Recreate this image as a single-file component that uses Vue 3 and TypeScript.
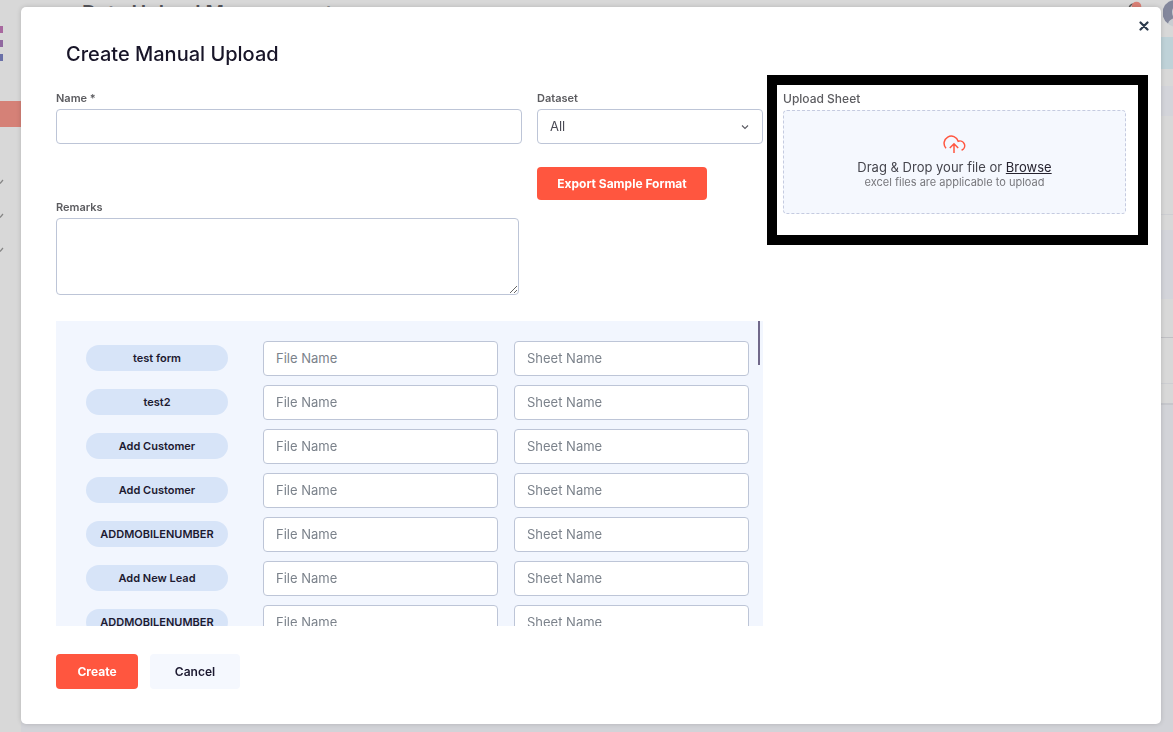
<script setup lang="ts">
import { computed, ref } from 'vue'

interface SheetRow {
  id: number
  form: string
  file: string
  sheet: string
}

const forms = ['test form', 'test2', 'Add Customer', 'Add Customer', 'ADDMOBILENUMBER', 'Add New Lead', 'ADDMOBILENUMBER']
const rows = ref<SheetRow[]>(forms.map((form, id) => ({ id, form, file: '', sheet: '' })))

const name = ref('')
const dataset = ref('All')
const remarks = ref('')
const open = ref(true)

const scrollRatio = ref(0)
const thumbStyle = computed(() => ({ top: `${scrollRatio.value * 86}%` }))

function onScroll(event: Event): void {
  const el = event.target as HTMLElement
  const range = el.scrollHeight - el.clientHeight
  scrollRatio.value = range > 0 ? el.scrollTop / range : 0
}
</script>

<template>
  <div class="page">
    <aside class="sidebar">
      <div class="burger"><i class="b1"></i><i class="b2"></i><i class="b3"></i></div>
      <div class="active-item"></div>
      <div class="carets">
        <svg v-for="n in 3" :key="n" width="4" height="6" viewBox="0 0 4 6"><path d="M0 4.500L3 1" fill="none" stroke="#858585" stroke-width="1.200" /></svg>
      </div>
    </aside>
    <div class="backdrop-main">
      <div class="topbar">
        <h1>Data Upload Management</h1>
        <svg class="bell" width="14" height="12" viewBox="0 0 14 12">
          <path d="M1 10c0-4 2-6 5-6" fill="none" stroke="#555" stroke-width="1.500" />
          <circle cx="8.500" cy="6.500" r="4.800" fill="#da8076" />
        </svg>
        <svg class="avatar" width="26" height="28" viewBox="0 0 26 28">
          <circle cx="14" cy="13" r="14" fill="#c9cdd2" />
          <path d="M14 0A13 13 0 0 0 5 23.500C6 20 9 19 11 18C8 14 8 7 14 5z" fill="#83879c" />
        </svg>
      </div>
      <div class="band teal"></div>
      <div class="band head"></div>
      <div class="band cell"></div>
      <div class="band tint"></div>
      <div class="band line"></div>
      <div class="band foot"></div>
    </div>
  </div>

  <div v-if="open" class="overlay">
    <section class="modal" role="dialog" aria-modal="true" aria-labelledby="modal-title">
      <header class="modal-header">
        <h2 id="modal-title">Create Manual Upload</h2>
        <button class="close" type="button" aria-label="Close" @click="open = false">
          <svg width="10" height="10" viewBox="0 0 10 10"><path d="M1.500 1.500L8.500 8.500M8.500 1.500L1.500 8.500" stroke="#2c3a4b" stroke-width="2.200" stroke-linecap="round" /></svg>
        </button>
      </header>

      <form class="body" @submit.prevent>
        <div class="main-col">
          <div class="fields">
            <div class="stack wide-gap">
              <div class="field">
                <label for="name">Name *</label>
                <input id="name" v-model="name" class="control" type="text" />
              </div>
              <div class="field">
                <label for="remarks">Remarks</label>
                <textarea id="remarks" v-model="remarks" class="control area"></textarea>
              </div>
            </div>
            <div class="stack">
              <div class="field">
                <label for="dataset">Dataset</label>
                <div class="select-wrap">
                  <select id="dataset" v-model="dataset" class="control">
                    <option>All</option>
                  </select>
                  <svg class="chevron" width="8" height="6" viewBox="0 0 8 6"><path d="M1 1.500L4 4.500L7 1.500" fill="none" stroke="#5a5a62" stroke-width="1.100" /></svg>
                </div>
              </div>
              <button class="btn primary export" type="button">Export Sample Format</button>
            </div>
          </div>

          <div class="sheet-panel">
            <div class="sheet-scroll" @scroll="onScroll">
              <div v-for="row in rows" :key="row.id" class="sheet-row">
                <span class="pill">{{ row.form }}</span>
                <input v-model="row.file" class="control" type="text" placeholder="File Name" :aria-label="`File Name, ${row.form}`" />
                <input v-model="row.sheet" class="control" type="text" placeholder="Sheet Name" :aria-label="`Sheet Name, ${row.form}`" />
              </div>
            </div>
            <div class="thumb" :style="thumbStyle"></div>
          </div>

          <div class="actions">
            <button class="btn primary create" type="submit">Create</button>
            <button class="btn cancel" type="button" @click="open = false">Cancel</button>
          </div>
        </div>

        <div class="upload">
          <div class="upload-label">Upload Sheet</div>
          <div class="dropzone">
            <svg width="23" height="19" viewBox="0 0 23 19" fill="none" stroke="#ff5640" stroke-width="1.500">
              <path d="M3 13.200A7.200 7.200 0 1 1 15.200 6.300A4.700 4.700 0 0 1 18.600 15.200" />
              <path d="M11 18V9M6.800 13L11 8.800L15.200 13" />
            </svg>
            <p class="drop-text">Drag &amp; Drop your file or <a href="#" @click.prevent>Browse</a></p>
            <p class="drop-hint">excel files are applicable to upload</p>
          </div>
        </div>
      </form>
    </section>
  </div>
</template>

<style>
body {
  background: #d8d8d8;
}
</style>

<style scoped>
* {
  box-sizing: border-box;
}

.page,
.overlay,
.page *,
.overlay * {
  font-family: Inter, "Liberation Sans", sans-serif;
}

.page {
  display: flex;
  height: 100vh;
  overflow: hidden;
}

.sidebar {
  width: 21px;
  background: #d8d8d8;
}

.burger {
  display: grid;
  gap: 7px;
  padding-top: 26px;
}

.burger i {
  width: 3px;
  height: 7px;
}

.b1 { background: #a8689f; }
.b2 { background: #9068a0; }
.b3 { background: #6a70a8; }

.active-item {
  height: 26px;
  margin-top: 40px;
  background: #d58177;
}

.carets {
  display: grid;
  gap: 28px;
  padding-top: 52px;
}

.carets svg {
  display: block;
}

.backdrop-main {
  flex: 1;
  min-width: 0;
  background: #d2d3d8;
}

.topbar {
  display: flex;
  align-items: flex-start;
  height: 37px;
  padding-left: 61px;
  background: #d8d8d8;
}

h1 {
  margin: 0;
  flex: 1;
  font-size: 20px;
  line-height: 26px;
  font-weight: 600;
  color: #55555a;
}

.bell {
  margin-right: 21px;
}

.avatar {
  flex: none;
  margin-right: -16px;
}

.band {
  background: #d8d8d8;
}

.teal {
  height: 32px;
  background: #bfd2d8;
}

.head {
  height: 47px;
  border-top: 17px solid #d8d8d8;
  background: #d3d4da;
}

.cell {
  height: 114px;
  border-bottom: 15px solid #d8d8d8;
  background: linear-gradient(#d8d8d8 98px, #cdced2 98px);
}

.tint {
  height: 69px;
  background: #d3d4da;
}

.line {
  height: 39px;
  border-bottom: 1px solid #c0c0c4;
}

.foot {
  height: 67px;
  border-bottom: 2px solid #c6c7cc;
  background: linear-gradient(#d8d8d8 45px, #cdced2 45px, #cdced2 46px, #d8d8d8 46px);
}

.overlay {
  position: fixed;
  inset: 0;
  padding: 7px 12px 8px 21px;
  overflow: auto;
  scrollbar-width: none;
}

.modal {
  background: #fff;
  border-radius: 5px;
  box-shadow: 0 0 5px rgba(0, 0, 0, 0.16);
}

.modal-header {
  display: flex;
  align-items: flex-start;
  justify-content: space-between;
  padding: 7px 5px 7px 45px;
}

h2 {
  margin: 26px 0 0;
  font-size: 20px;
  line-height: 28px;
  font-weight: 500;
  color: #181528;
}

.close {
  display: grid;
  place-items: center;
  width: 24px;
  height: 24px;
  padding: 0;
  border: 0;
  background: none;
  cursor: pointer;
}

.body {
  display: grid;
  grid-template-columns: minmax(0, 707fr) minmax(0, 381fr);
  gap: 4px;
  align-items: start;
  padding: 0 13px 35px 35px;
}

.main-col {
  padding-top: 15px;
}

.fields {
  display: grid;
  grid-template-columns: minmax(0, 466fr) minmax(0, 226fr);
  gap: 15px;
}

.stack {
  display: flex;
  flex-direction: column;
  align-items: flex-start;
  gap: 23px;
}

.wide-gap {
  gap: 55px;
}

.field {
  width: 100%;
}

label {
  display: block;
  margin-bottom: 3px;
  font-size: 11px;
  line-height: 16px;
  font-weight: 600;
  color: #5c5c60;
}

.control {
  display: block;
  width: 100%;
  height: 35px;
  padding: 0 12px 2px;
  border: 1px solid #bdc5d7;
  border-radius: 4px;
  outline: 0;
  background: #fff;
  font-size: 13px;
  color: #4b4b55;
}

.control::placeholder {
  color: #7b828b;
  opacity: 1;
}

.area {
  width: calc(100% - 3px);
  height: 77px;
  resize: both;
}

.select-wrap {
  position: relative;
}

select.control {
  appearance: none;
}

.chevron {
  position: absolute;
  top: 15px;
  right: 14px;
  pointer-events: none;
}

.btn {
  height: 35px;
  padding: 0;
  border: 0;
  border-radius: 4px;
  font-size: 12px;
  font-weight: 600;
  cursor: pointer;
}

.primary {
  background: #ff563f;
  color: #fff;
  font-weight: 700;
}

.export {
  width: 170px;
  height: 33px;
}

.sheet-panel {
  position: relative;
  height: 305px;
  margin-top: 26px;
  background: #f2f6fe;
}

.sheet-scroll {
  display: grid;
  gap: 9px;
  height: 100%;
  padding: 20px 14px 0 30px;
  overflow-y: auto;
  scrollbar-width: none;
}

.sheet-row {
  display: grid;
  grid-template-columns: minmax(0, 161fr) minmax(0, 235fr) minmax(0, 235fr);
  gap: 16px;
  align-items: start;
}

.pill {
  height: 26px;
  margin: 4px 19px 0 0;
  border-radius: 13px;
  background: #d7e4f8;
  font-size: 11px;
  line-height: 26px;
  font-weight: 600;
  text-align: center;
  white-space: nowrap;
  color: #1c1930;
}

.thumb {
  position: absolute;
  right: 3px;
  width: 2px;
  height: 44px;
  background: #70688a;
}

.actions {
  display: flex;
  gap: 12px;
  margin-top: 28px;
}

.create {
  width: 82px;
}

.cancel {
  width: 90px;
  background: #f5f8fe;
  color: #1c1930;
}

.upload {
  padding: 6px 12px 21px 6px;
  border: 10px solid #000;
}

.upload-label {
  margin-bottom: 3px;
  font-size: 12px;
  line-height: 16px;
  font-weight: 500;
  color: #5c5c60;
}

.dropzone {
  display: flex;
  flex-direction: column;
  align-items: center;
  height: 104px;
  padding-top: 24px;
  border: 1px dashed #c5cbe0;
  border-radius: 4px;
  background: #f5f8fe;
}

p {
  margin: 0;
}

.drop-text {
  margin-top: 5px;
  font-size: 13px;
  line-height: 16px;
  color: #45454d;
}

.drop-text a {
  color: #26232f;
}

.drop-hint {
  font-size: 11px;
  line-height: 14px;
  color: #77777c;
}
</style>
